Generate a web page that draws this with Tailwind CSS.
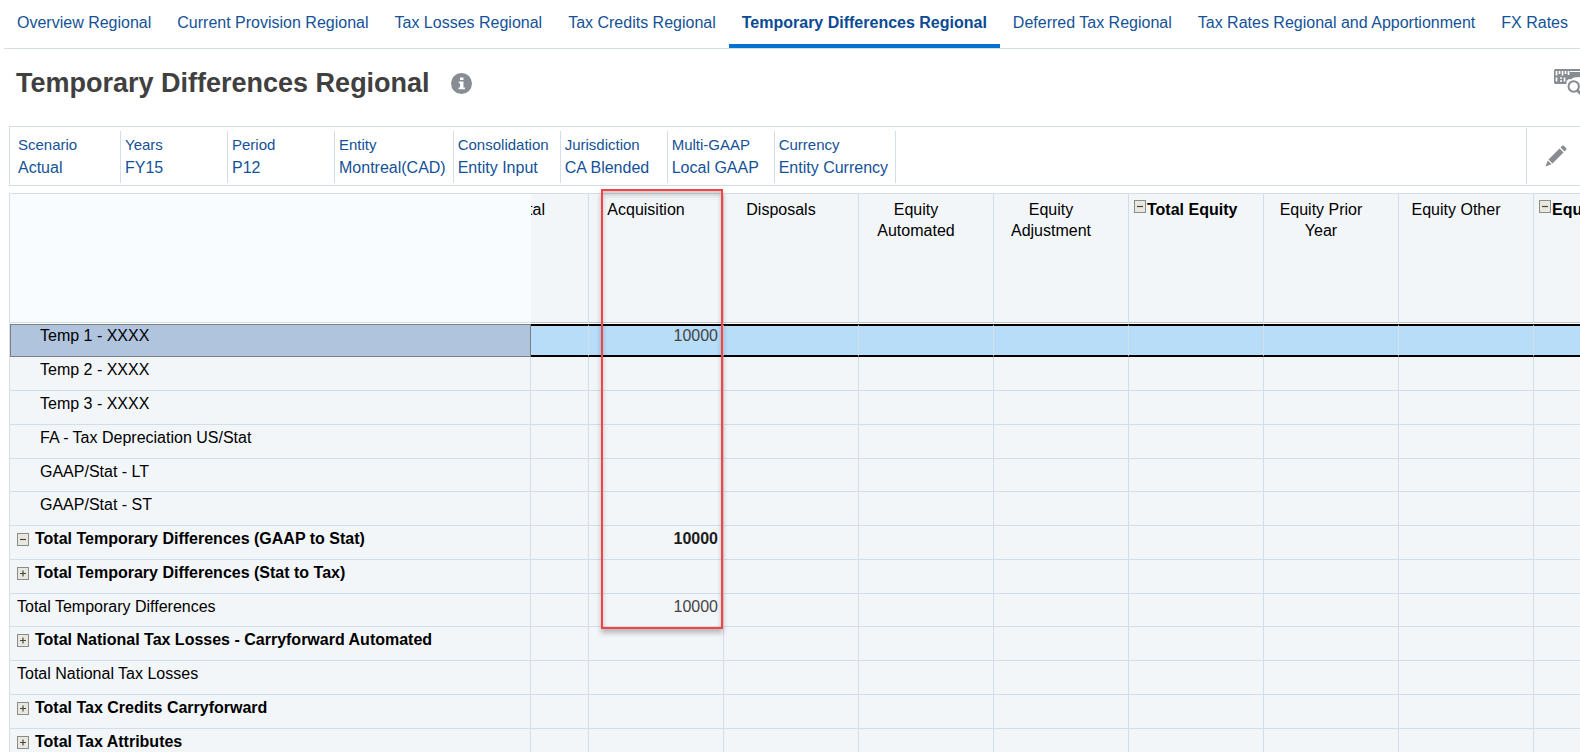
<!DOCTYPE html>
<html lang="en">
<head>
    <meta charset="UTF-8">
    <meta name="viewport" content="width=device-width, initial-scale=1.0">
    <title>Temporary Differences Regional</title>
    <script src="https://cdn.jsdelivr.net/npm/@tailwindcss/browser@4"></script>
</head>
<body class="h-screen overflow-hidden flex flex-col bg-white font-['Liberation_Sans',Arial,sans-serif] text-base text-black">
    <nav class="ml-1 h-[49px] shrink-0 flex border-b border-[#d3dee9] text-[#145297] whitespace-nowrap leading-[46px]">
        <a href="#" class="px-[13px]">Overview Regional</a>
        <a href="#" class="px-[13px]">Current Provision Regional</a>
        <a href="#" class="px-[13px]">Tax Losses Regional</a>
        <a href="#" class="px-[13px]">Tax Credits Regional</a>
        <a href="#" aria-current="page" class="px-[13px] border-b-4 border-[#0572ce] font-bold text-[#0b4a94]">Temporary Differences Regional</a>
        <a href="#" class="px-[13px]">Deferred Tax Regional</a>
        <a href="#" class="px-[13px]">Tax Rates Regional and Apportionment</a>
        <a href="#" class="px-[13px]">FX Rates</a>
    </nav>

    <header class="h-[77px] shrink-0 pl-4 flex items-start">
        <h1 class="mt-4 text-[27px] leading-9 font-bold text-[#404040]">Temporary Differences Regional</h1>
        <button type="button" aria-label="Information" class="mt-6 ml-[21px]">
            <svg class="block size-[21px]" viewBox="0 0 21 21">
                <circle cx="10.5" cy="10.5" r="10.5" fill="#878d92"/>
                <path d="M9 4.5h3.5v2.6H9zM7.8 8.6h4.7v6h1.4v1.6H7.6v-1.6H9v-4.4H7.8z" fill="#fff"/>
            </svg>
        </button>
        <button type="button" aria-label="Search member" class="ml-auto mt-5 w-[26px] overflow-hidden">
            <svg class="block w-[34px] h-7" viewBox="0 0 34 28">
                <rect width="34" height="15" rx="1.5" fill="#868c91"/>
                <path d="M2.500 2v4.500M5.500 2v3M8.500 2v4.500M11.500 2v3M14.500 2v4M2.500 8.500v4M6 9h2M6 12h2M10.500 8.500v4" stroke="#fff" stroke-width="1.700"/>
                <path d="M16 2.500h10" stroke="#fff" stroke-width="1"/>
                <path d="M12.500 15.500V12l6-5 9-1v10z" fill="#fff"/>
                <path d="M14 9.500l5-4.500h8v3l-7 .5-3.500 2z" fill="#868c91"/>
                <circle cx="19.700" cy="17.500" r="7" fill="#fff"/>
                <circle cx="19.700" cy="17.500" r="5.200" fill="none" stroke="#868c91" stroke-width="2"/>
                <path d="M23.500 21.500l4.500 4.500" stroke="#868c91" stroke-width="3"/>
            </svg>
        </button>
    </header>

    <section class="ml-[9px] h-[60px] shrink-0 flex border-y border-l border-[#d3dee9] text-[#145297] whitespace-nowrap">
        <div id="pov" class="pl-1 pt-1 pb-0.5 flex"></div>
        <div class="ml-auto my-px w-[54px] border-l border-[#d3dee9] flex items-center">
            <button type="button" aria-label="Edit" class="ml-[18px]">
                <svg class="block size-[22px]" viewBox="0 0 22 22" fill="#868c91">
                    <path d="M14.500 3.500l4 4L7.500 18.500l-4-4z"/>
                    <path d="M15.500 2.500l1.700-1.700q.8-.8 1.600 0l2.400 2.400q.8.8 0 1.600l-1.700 1.700z"/>
                    <path d="M2.700 15.500l3.800 3.800L.500 21.500z"/>
                </svg>
            </button>
        </div>
    </section>

    <main class="relative mt-[7px] ml-[9px] flex-1 min-h-0">
        <div class="h-full overflow-hidden border-t border-l border-[#d3dee9]">
            <table class="w-[1658px] table-fixed border-separate border-spacing-0 bg-[#f3f6f9]">
                <colgroup>
                    <col class="w-[521px]">
                    <col class="w-[58px]">
                    <col span="8" class="w-[135px]">
                </colgroup>
                <thead>
                    <tr id="columns" class="h-[130px] align-top leading-[21px]">
                        <td class="bg-[#f9fcfe] border-b border-white shadow-[inset_0_-1px_0_#d3dee9]"></td>
                    </tr>
                </thead>
                <tbody id="rows" class="align-top leading-5"></tbody>
            </table>
        </div>
        <!-- highlight around the Acquisition column -->
        <div class="absolute left-[592px] -top-1 w-[122px] h-[440px] border-2 border-[#fb4242] shadow-[0_4px_5px_rgba(0,0,0,0.25),inset_0_4px_5px_rgba(0,0,0,0.2)]"></div>
    </main>

    <script>
        const pov = [
            ['Scenario', 'Actual'],
            ['Years', 'FY15'],
            ['Period', 'P12'],
            ['Entity', 'Montreal(CAD)'],
            ['Consolidation', 'Entity Input'],
            ['Jurisdiction', 'CA Blended'],
            ['Multi-GAAP', 'Local GAAP'],
            ['Currency', 'Entity Currency'],
        ];

        const columns = [
            { name: 'Total', clipped: true },
            { name: 'Acquisition' },
            { name: 'Disposals' },
            { name: 'Equity Automated' },
            { name: 'Equity Adjustment' },
            { name: 'Total Equity', total: true },
            { name: 'Equity Prior Year' },
            { name: 'Equity Other' },
            { name: 'Equity', total: true },
        ];

        const rows = [
            { name: 'Temp 1 - XXXX', level: 1, value: '10000', selected: true },
            { name: 'Temp 2 - XXXX', level: 1 },
            { name: 'Temp 3 - XXXX', level: 1 },
            { name: 'FA - Tax Depreciation US/Stat', level: 1 },
            { name: 'GAAP/Stat - LT', level: 1 },
            { name: 'GAAP/Stat - ST', level: 1 },
            { name: 'Total Temporary Differences (GAAP to Stat)', toggle: 'minus', value: '10000' },
            { name: 'Total Temporary Differences (Stat to Tax)', toggle: 'plus' },
            { name: 'Total Temporary Differences', value: '10000' },
            { name: 'Total National Tax Losses - Carryforward Automated', toggle: 'plus' },
            { name: 'Total National Tax Losses' },
            { name: 'Total Tax Credits Carryforward', toggle: 'plus' },
            { name: 'Total Tax Attributes', toggle: 'plus' },
        ];

        function toggle(kind) {
            const sign = kind === 'plus' ? 'M3 6.5h6M6 3.5v6' : 'M3 6.5h6';
            return `<button type="button" aria-label="${kind === 'plus' ? 'Expand' : 'Collapse'}" class="shrink-0">
                <svg class="block w-3 h-[13px]" viewBox="0 0 12 13">
                    <rect x=".5" y=".5" width="11" height="12" fill="#e9e8e0" stroke="#8a8c86"/>
                    <path d="${sign}" stroke="#454741" stroke-width="1.200"/>
                </svg>
            </button>`;
        }

        document.getElementById('pov').innerHTML = pov.map(([label, value]) => `
            <button type="button" class="min-w-[107px] pl-1 pr-[7px] pb-px border-r border-[#d3dee9] text-left">
                <span class="block text-[15px] leading-[22px]">${label}</span>
                <span class="block leading-[23px]">${value}</span>
            </button>`).join('');

        document.getElementById('columns').innerHTML += columns.map(col => {
            let inner = `<div class="pl-[5px] pr-[25px] text-center">${col.name}</div>`;
            if (col.clipped) inner = `<div class="pr-[43px] flex justify-end overflow-hidden">${col.name}</div>`;
            if (col.total) inner = `<div class="pl-[5px] flex items-start gap-px whitespace-nowrap"><span class="-mt-0.5">${toggle('minus')}</span>${col.name}</div>`;
            return `<th scope="col" class="pt-[5px] border-r border-r-[#d3dee9] border-b border-b-white shadow-[inset_0_-1px_0_#bcc6ca] overflow-hidden ${col.total ? 'font-bold' : 'font-normal'}">${inner}</th>`;
        }).join('');

        document.getElementById('rows').innerHTML += rows.map(row => {
            const head = row.selected
                ? 'border border-[#7f7f7f] bg-[#b0c4de] pt-px pl-[29px]'
                : `border-b border-r border-[#d3dee9] pt-[3px] ${row.level ? 'pl-[30px]' : 'pl-[7px]'}`;
            const cell = row.selected
                ? 'border-y-2 border-r border-y-black border-r-[#d3dee9] bg-[#b7ddf9]'
                : 'border-b border-r border-[#d3dee9] pt-[3px]';
            const weight = row.toggle ? 'font-bold' : 'font-normal';
            return `<tr class="h-[34px] nth-[4n+1]:h-[33px]">
                <th scope="row" class="${head} ${weight} text-left">
                    <div class="flex items-center gap-1.5">${row.toggle ? toggle(row.toggle) : ''}${row.name}</div>
                </th>
                ${columns.map((col, i) => `<td class="${cell} ${weight} pr-[5px] text-right ${row.toggle ? 'text-[#1c1c1c]' : 'text-[#444]'}">${i === 1 && row.value ? row.value : ''}</td>`).join('')}
            </tr>`;
        }).join('');
    </script>
</body>
</html>
